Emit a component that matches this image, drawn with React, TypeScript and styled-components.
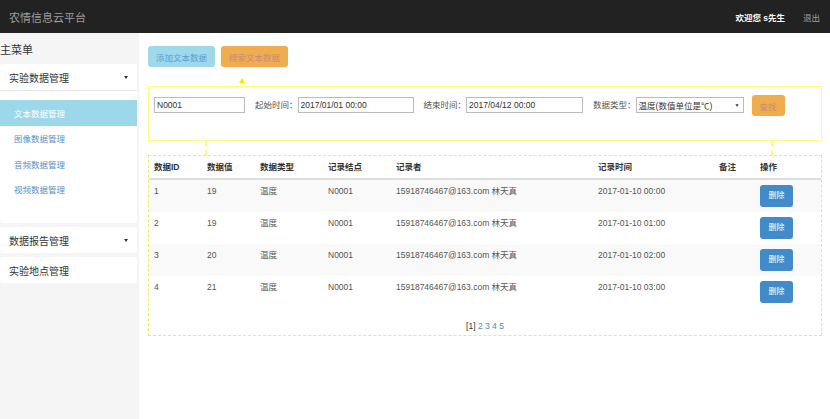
import styled, { createGlobalStyle } from 'styled-components';

const GlobalStyle = createGlobalStyle`
  html, body {
    margin: 0;
    padding: 0;
    background: #fff;
  }
  body {
    font-family: "Liberation Sans", "Noto Sans CJK SC", sans-serif;
    color: #333;
  }
  * {
    box-sizing: border-box;
  }
`;

interface Row {
  id: number;
  value: number;
  type: string;
  node: string;
  recorder: string;
  time: string;
}

const rows: Row[] = [
  { id: 1, value: 19, type: '温度', node: 'N0001', recorder: '15918746467@163.com 林天真', time: '2017-01-10 00:00' },
  { id: 2, value: 19, type: '温度', node: 'N0001', recorder: '15918746467@163.com 林天真', time: '2017-01-10 01:00' },
  { id: 3, value: 20, type: '温度', node: 'N0001', recorder: '15918746467@163.com 林天真', time: '2017-01-10 02:00' },
  { id: 4, value: 21, type: '温度', node: 'N0001', recorder: '15918746467@163.com 林天真', time: '2017-01-10 03:00' },
];

const colWidths = [53, 53, 68, 68, 202, 121, 41, 66];
const subItems = ['文本数据管理', '图像数据管理', '音频数据管理', '视频数据管理'];

const App = () => {
  return (
    <>
      <GlobalStyle />
      <Page>
        <TopBar>
          <Brand>农情信息云平台</Brand>
          <UserArea>
            <Welcome>欢迎您 s先生</Welcome>
            <Logout>退出</Logout>
          </UserArea>
        </TopBar>
        <Body>
          <Sidebar>
            <MenuTitle>主菜单</MenuTitle>
            <Panel>
              <PanelHead>
                实验数据管理
                <Caret />
              </PanelHead>
              <SubList>
                {subItems.map((item, i) => (
                  <SubItem key={item} active={i === 0}>{item}</SubItem>
                ))}
              </SubList>
            </Panel>
            <Panel>
              <PanelHead>
                数据报告管理
                <Caret />
              </PanelHead>
            </Panel>
            <Panel>
              <PanelHead>实验地点管理</PanelHead>
            </Panel>
          </Sidebar>
          <Main>
            <ButtonRow>
              <TabButton variant="info">添加文本数据</TabButton>
              <TabButton variant="warning">搜索文本数据</TabButton>
            </ButtonRow>
            <Arrow />
            <SearchBox>
              <TextInput readOnly value="N0001" width={91} />
              <Label>起始时间：</Label>
              <TextInput readOnly value="2017/01/01 00:00" width={116} />
              <Label>结束时间：</Label>
              <TextInput readOnly value="2017/04/12 00:00" width={117} />
              <Label>数据类型：</Label>
              <SelectBox>
                <span>温度(数值单位是℃)</span>
                <SelectArrow>▼</SelectArrow>
              </SelectBox>
              <FindButton>查找</FindButton>
            </SearchBox>
            <Connectors>
              <Connector />
              <Connector />
            </Connectors>
            <TableBox>
              <DataTable>
                <colgroup>
                  {colWidths.map((w, i) => (
                    <col key={i} style={{ width: w }} />
                  ))}
                </colgroup>
                <thead>
                  <tr>
                    <Th>数据ID</Th>
                    <Th>数据值</Th>
                    <Th>数据类型</Th>
                    <Th>记录结点</Th>
                    <Th>记录者</Th>
                    <Th>记录时间</Th>
                    <Th>备注</Th>
                    <Th>操作</Th>
                  </tr>
                </thead>
                <tbody>
                  {rows.map((r, i) => (
                    <Tr key={r.id} striped={i % 2 === 0}>
                      <Td>{r.id}</Td>
                      <Td>{r.value}</Td>
                      <Td>{r.type}</Td>
                      <Td>{r.node}</Td>
                      <Td>{r.recorder}</Td>
                      <Td>{r.time}</Td>
                      <Td></Td>
                      <Td>
                        <DeleteButton>删除</DeleteButton>
                      </Td>
                    </Tr>
                  ))}
                </tbody>
              </DataTable>
              <Pager>
                [1] <PageLink>2</PageLink> <PageLink>3</PageLink> <PageLink>4</PageLink> <PageLink>5</PageLink>
              </Pager>
            </TableBox>
          </Main>
        </Body>
      </Page>
    </>
  );
};

export default App;

const Page = styled.div`
  min-height: 100vh;
  display: flex;
  flex-direction: column;
`;

const TopBar = styled.div`
  height: 33px;
  background: #222;
  display: flex;
  align-items: center;
  justify-content: space-between;
  padding: 0 10px 0 9px;
  flex-shrink: 0;
`;

const Brand = styled.div`
  color: #9d9d9d;
  font-size: 11px;
`;

const UserArea = styled.div`
  display: flex;
  align-items: center;
  gap: 18px;
`;

const Welcome = styled.span`
  color: #fff;
  font-size: 8.5px;
  font-weight: bold;
`;

const Logout = styled.span`
  color: #9d9d9d;
  font-size: 8.5px;
`;

const Body = styled.div`
  flex: 1;
  display: flex;
`;

const Sidebar = styled.div`
  width: 139px;
  flex-shrink: 0;
  background: #f5f5f5;
  padding: 10px 2px 0 0;
  display: flex;
  flex-direction: column;
  gap: 4px;
`;

const MenuTitle = styled.div`
  font-size: 11px;
  line-height: 14px;
  color: #333;
  margin-bottom: 3px;
`;

const Panel = styled.div`
  background: #fff;
  border-radius: 3px;
  overflow: hidden;
`;

const PanelHead = styled.div`
  height: 26px;
  display: flex;
  align-items: center;
  justify-content: space-between;
  padding: 0 9px 0 9px;
  font-size: 10px;
  color: #333;
  & + div {
    border-top: 1px solid #e5e5e5;
  }
`;

const Caret = styled.span`
  width: 0;
  height: 0;
  border-left: 2.5px solid transparent;
  border-right: 2.5px solid transparent;
  border-top: 3px solid #333;
`;

const SubList = styled.div`
  padding: 9px 0 21px;
`;

const SubItem = styled.div<{ active?: boolean }>`
  height: 25.5px;
  display: flex;
  align-items: center;
  padding-left: 14px;
  font-size: 8.5px;
  color: ${({ active }) => (active ? '#fff' : '#5b8fcb')};
  background: ${({ active }) => (active ? '#9dd8ea' : 'transparent')};
`;

const Main = styled.div`
  flex: 1;
  padding: 13px 8px 0 9px;
  display: flex;
  flex-direction: column;
`;

const ButtonRow = styled.div`
  display: flex;
  gap: 6px;
`;

const TabButton = styled.div<{ variant: 'info' | 'warning' }>`
  height: 21px;
  padding: 0 8px;
  display: flex;
  align-items: center;
  font-size: 8.5px;
  border-radius: 3px;
  background: ${({ variant }) => (variant === 'info' ? '#9dd9eb' : '#f0ad4e')};
  color: ${({ variant }) => (variant === 'info' ? '#5d9fcc' : '#c98a7a')};
`;

const Arrow = styled.div`
  margin: 11px 0 3px 91px;
  width: 0;
  height: 0;
  border-left: 3.5px solid transparent;
  border-right: 3.5px solid transparent;
  border-bottom: 5px solid #eded00;
`;

const SearchBox = styled.div`
  border: 1px solid #ffff80;
  height: 55px;
  padding: 8px 5px 0;
  display: flex;
  align-items: flex-start;
`;

const TextInput = styled.input<{ width: number }>`
  width: ${({ width }) => width}px;
  height: 16px;
  margin-top: 2px;
  border: 1px solid #bbb;
  padding: 0 2px;
  font-family: "Liberation Sans", "Noto Sans CJK SC", sans-serif;
  font-size: 8.5px;
  color: #333;
  outline: none;
`;

const Label = styled.span`
  margin: 2px 0 0 10px;
  height: 16px;
  line-height: 16px;
  font-size: 8.5px;
  color: #555;
`;

const SelectBox = styled.div`
  width: 108px;
  height: 16px;
  margin-top: 2px;
  border: 1px solid #bbb;
  padding: 0 3px 0 2px;
  display: flex;
  align-items: center;
  justify-content: space-between;
  font-size: 8.5px;
  color: #333;
`;

const SelectArrow = styled.span`
  font-size: 5px;
  color: #333;
`;

const FindButton = styled.div`
  margin-left: 8px;
  width: 33px;
  height: 21px;
  border-radius: 3px;
  background: #f0ad4e;
  color: #c98a7a;
  font-size: 8.5px;
  display: flex;
  align-items: center;
  justify-content: center;
`;

const Connectors = styled.div`
  height: 14px;
  display: flex;
  justify-content: space-between;
  padding: 0 49px 0 57px;
`;

const Connector = styled.div`
  width: 0;
  height: 100%;
  border-left: 2px dashed #ffff70;
`;

const TableBox = styled.div`
  border: 1px dashed #eeee55;
  padding-bottom: 4px;
`;

const DataTable = styled.table`
  width: 100%;
  table-layout: fixed;
  border-collapse: collapse;
  font-size: 8.5px;
`;

const Th = styled.th`
  text-align: left;
  padding: 5px 5px;
  line-height: 12px;
  font-weight: bold;
  color: #333;
  border-bottom: 2px solid #ddd;
`;

const Tr = styled.tr<{ striped?: boolean }>`
  background: ${({ striped }) => (striped ? '#f9f9f9' : '#fff')};
  & + & td {
    border-top: 1px solid #ddd;
  }
`;

const Td = styled.td`
  padding: 5px 5px;
  line-height: 12px;
  vertical-align: top;
  color: #555;
  white-space: nowrap;
`;

const DeleteButton = styled.div`
  width: 33px;
  height: 22px;
  border-radius: 3px;
  background: #428bca;
  color: #fff;
  font-size: 8px;
  display: flex;
  align-items: center;
  justify-content: center;
`;

const Pager = styled.div`
  text-align: center;
  font-size: 8.5px;
  color: #333;
  padding-top: 13px;
`;

const PageLink = styled.span`
  color: #428bca;
`;
